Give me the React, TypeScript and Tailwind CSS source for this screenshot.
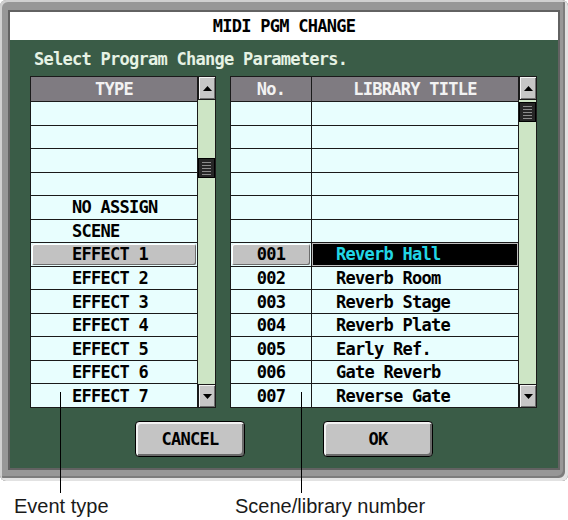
import React from 'react'

const LCD = "font-['DejaVu_Sans_Mono',monospace] font-bold text-[17px] tracking-[-0.74px] leading-[18px]"

const TYPES = ['', '', '', '', 'NO ASSIGN', 'SCENE', 'EFFECT 1', 'EFFECT 2', 'EFFECT 3', 'EFFECT 4', 'EFFECT 5', 'EFFECT 6', 'EFFECT 7']

const LIBRARY: [string, string][] = [
  ['', ''], ['', ''], ['', ''], ['', ''], ['', ''], ['', ''],
  ['001', 'Reverb Hall'],
  ['002', 'Reverb Room'],
  ['003', 'Reverb Stage'],
  ['004', 'Reverb Plate'],
  ['005', 'Early Ref.'],
  ['006', 'Gate Reverb'],
  ['007', 'Reverse Gate'],
]

function Arrow({ down }: { down?: boolean }) {
  return (
    <div className="h-[24px] shrink-0 bg-[#c6c6c6] border border-[#1a1a1a] shadow-[inset_1px_1px_0_#f4f4f4,inset_-1px_-1px_0_#707070] flex items-center justify-center">
      <svg width="9" height="5" viewBox="0 0 9 5">
        <path d={down ? 'M0 0H9L4.5 5Z' : 'M4.5 0L9 5H0Z'} fill="#000" />
      </svg>
    </div>
  )
}

function ScrollBar({ top }: { top: 'low' | 'high' }) {
  return (
    <div className="w-[18px] h-[332px] flex flex-col bg-[#cde5c5]">
      <Arrow />
      <div className="flex-1 flex flex-col border-r border-[#1a1a1a]">
        <div className={top === 'low' ? 'mt-[58px]' : 'mt-[2px]'}>
          <div className="h-[20px] bg-[#262626] border border-black flex flex-col justify-center gap-[2px] px-[3px]">
            {[0, 1, 2, 3, 4].map(i => <div key={i} className="h-px bg-[#8c8c8c]" />)}
          </div>
        </div>
      </div>
      <Arrow down />
    </div>
  )
}

function Pressed({ children, className }: { children: React.ReactNode; className: string }) {
  return (
    <div className={`self-stretch flex-1 m-[1px] rounded-[2px] bg-[#c2c2c2] shadow-[inset_1px_1px_0_#ffffff,inset_-1px_-1px_0_#6c6c6c] flex items-center ${className}`}>
      {children}
    </div>
  )
}

function TypeList() {
  return (
    <div className="w-[168px] h-[332px] border border-[#1a1a1a] flex flex-col bg-[#e8fefe]">
      <div className="h-[25px] shrink-0 bg-[#7f7b81] border-b border-[#1a1a1a] flex items-center justify-center text-[#f2f2f2]">
        TYPE
      </div>
      {TYPES.map((t, i) => (
        <div key={i} className={`flex-1 flex items-center text-black ${i > 0 ? 'border-t border-[#1a1a1a]' : ''}`}>
          {t === 'EFFECT 1'
            ? <Pressed className="pl-[40px]">{t}</Pressed>
            : <span className="pl-[41px]">{t}</span>}
        </div>
      ))}
    </div>
  )
}

function LibraryList() {
  return (
    <div className="w-[289px] h-[332px] border border-[#1a1a1a] flex flex-col bg-[#e8fefe]">
      <div className="h-[25px] shrink-0 bg-[#7f7b81] border-b border-[#1a1a1a] flex text-[#f2f2f2]">
        <div className="w-[81px] border-r border-[#1a1a1a] flex items-center justify-center">No.</div>
        <div className="flex-1 flex items-center justify-center">LIBRARY TITLE</div>
      </div>
      {LIBRARY.map(([no, title], i) => (
        <div key={i} className={`flex-1 flex text-black ${i > 0 ? 'border-t border-[#1a1a1a]' : ''}`}>
          <div className="w-[81px] border-r border-[#1a1a1a] flex items-center justify-center">
            {no === '001' ? <Pressed className="justify-center">{no}</Pressed> : no}
          </div>
          {no === '001' ? (
            <div className="flex-1 flex items-center bg-black border border-[#bdbdbd] pl-[23px] text-[#22d6e6]">
              {title}
            </div>
          ) : (
            <div className="flex-1 flex items-center pl-[24px]">{title}</div>
          )}
        </div>
      ))}
    </div>
  )
}

function Button({ label }: { label: string }) {
  return (
    <div className="w-[110px] h-[36px] rounded-[4px] border border-black bg-[#c4c4c4] shadow-[inset_2px_2px_0_#f2f2f2,inset_-2px_-2px_0_#6a6a6a] flex items-center justify-center text-black">
      {label}
    </div>
  )
}

export default function App() {
  return (
    <div className="relative w-[568px] h-[520px] bg-white overflow-hidden">
      {/* Dialog frame */}
      <div className="w-[568px] h-[481px] rounded-[6px] bg-[#979797] px-[10px] pt-[12px] pb-[13px] shadow-[inset_2px_2px_0_#d0d0d0,inset_-3px_-3px_0_#e2e2e2,inset_-5px_-5px_0_#7c7c7c]">
        <div className={`h-full flex flex-col shadow-[0_0_0_2px_#626262] ${LCD}`}>
          <div className="h-[28px] shrink-0 bg-white flex items-center justify-center text-black">
            MIDI PGM CHANGE
          </div>
          <div className="flex-1 bg-[#3a5c47]">
            <div className="mt-[10px] ml-[24px] h-[18px] text-[#e6f2e4]">Select Program Change Parameters.</div>
            <div className="mt-[8px] ml-[20px] flex">
              <TypeList />
              <ScrollBar top="low" />
              <div className="w-[14px]" />
              <LibraryList />
              <ScrollBar top="high" />
            </div>
            <div className="mt-[13px] flex justify-center gap-[78px]">
              <Button label="CANCEL" />
              <Button label="OK" />
            </div>
          </div>
        </div>
      </div>

      {/* Callout labels */}
      <div className="flex mt-[14px] font-['Liberation_Sans',Arial,sans-serif] text-[20px] leading-[23px] text-[#1a1a1a]">
        <div className="w-[235px] pl-[14px]">Event type</div>
        <div>Scene/library number</div>
      </div>

      {/* Leader lines */}
      <div className="absolute left-[60px] top-[392px] w-px h-[101px] bg-black" />
      <div className="absolute left-[301px] top-[392px] w-px h-[101px] bg-black" />
    </div>
  )
}
